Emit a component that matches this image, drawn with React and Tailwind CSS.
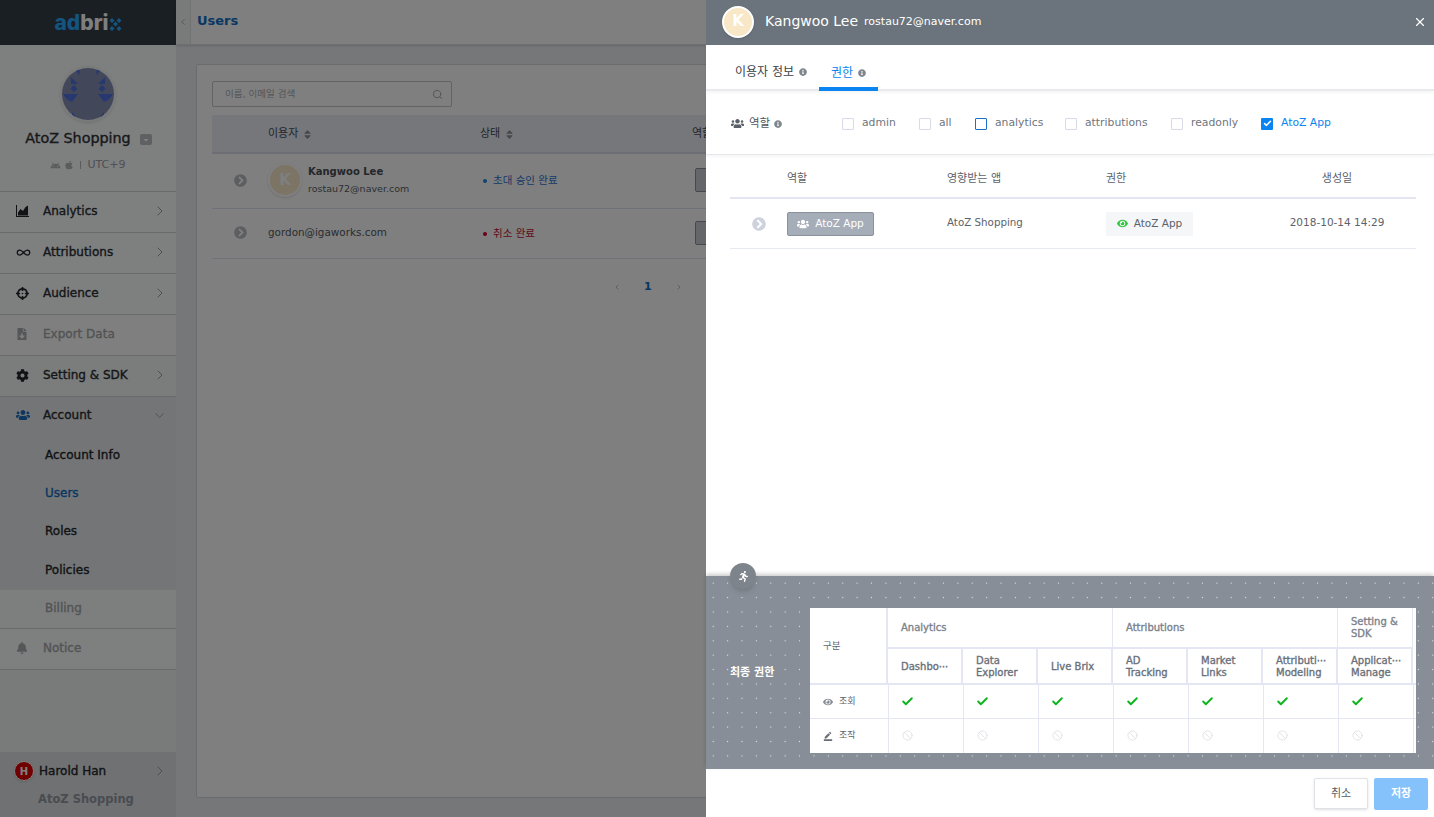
import { ChevronRight, ChevronDown, ChevronLeft, Search, X, Check, Ban, Infinity as InfinityIcon } from 'lucide-react'
import {
  FaApple, FaCrosshairs, FaFileDownload, FaCog, FaUsers, FaBell,
  FaEye, FaSort, FaRunning, FaInfoCircle, FaChevronCircleRight, FaCaretDown,
} from 'react-icons/fa'
import { MdBorderColor, MdAndroid } from 'react-icons/md'

// the reference text is a touch heavier than regular and narrower than bold
const medium = '[-webkit-text-stroke:0.35px_currentColor]'

function ChartIcon() {
  return (
    <svg width="13" height="12" viewBox="0 0 13 12" fill="currentColor">
      <path d="M0 0h1v11h12v1H0z" />
      <path d="M2 10.500V7.500l2.500-3.500L7 6l2.500-4L12 .5v10z" />
    </svg>
  )
}

function Logo() {
  return (
    <div className="flex items-center font-['Inter',sans-serif] text-[21px] font-extrabold leading-none">
      <span className="text-[#2aa8ff]">ad</span>
      <span className="text-[#ffffff]">bri</span>
      <svg width="13" height="13" viewBox="0 0 13 13" fill="#2aa8ff" className="mt-[3px]">
        <path d="M3 0l2.500 2.500L3 5 .5 2.500zM10 0l2.500 2.500L10 5 7.500 2.500zM6.500 3.500L9 6 6.500 8.500 4 6zM3 8l2.500 2.500L3 13 .5 10.500zM10 8l2.500 2.500L10 13l-2.500-2.500z" />
      </svg>
    </div>
  )
}

function AppAvatar() {
  return (
    <div className="h-[56px] w-[56px] overflow-hidden rounded-full border-2 border-[#f3f4f5] shadow">
      <svg width="52" height="52" viewBox="0 0 52 52">
        <rect width="52" height="52" fill="#868eb4" />
        <g fill="#4c70de">
          <path d="M13 2l4.500 0v5zM39 2l-4.500 0v5zM9 9l7 7H9zM43 9l-7 7h7zM12 17l3.500 3.500L12 24l-3.500-3.500zM40 17l3.500 3.500L40 24l-3.500-3.500z" />
          <path d="M1 26h15l-6 8q-6-2-9-8zM51 26H36l6 8q6-2 9-8zM10 44l6 8h-6zM42 44l-6 8h6z" />
        </g>
      </svg>
    </div>
  )
}

function MenuRow({ icon, label, muted, arrow, iconClass, bg = 'bg-[#fcfefe]' }) {
  return (
    <div className={`flex h-[41px] shrink-0 items-center border-b border-[#d2d4d6] pb-[2px] pl-[16px] pr-[8px] ${bg}`}>
      <span className={`flex w-[27px] shrink-0 ${iconClass || (muted ? 'text-[#a8acae]' : 'text-[#22262a]')}`}>{icon}</span>
      <span className={`flex-1 text-[12px] ${medium} ${muted ? 'text-[#a4a8aa]' : 'text-[#2a2e32]'}`}>{label}</span>
      {arrow && <ChevronRight size={16} strokeWidth={1.5} className="text-[#9a9ea2]" />}
    </div>
  )
}

function SubItem({ label, active, height = 'h-[38px]' }) {
  return (
    <div className={`flex shrink-0 items-center pb-[2px] pl-[45px] text-[12px] ${medium} ${height} ${active ? 'text-[#0f6fc4]' : 'text-[#22262a]'}`}>
      {label}
    </div>
  )
}

function Sidebar() {
  return (
    <aside className="flex h-full w-[176px] shrink-0 flex-col bg-[#fcfefe]">
      <div className="flex h-[45px] shrink-0 items-center justify-center bg-[#343e48]">
        <Logo />
      </div>
      <div className="flex h-[147px] shrink-0 flex-col items-center border-b border-[#d2d4d6] pt-[21px]">
        <AppAvatar />
        <div className="mt-[7px] flex items-center gap-[9px] pl-[1px]">
          <span className={`text-[14.3px] leading-[18px] text-[#2e3236] ${medium}`}>AtoZ Shopping</span>
          <span className="mt-[3px] flex h-[11px] w-[12px] items-center justify-center rounded-[2px] bg-[#bcc0c4] text-white">
            <FaCaretDown size={8} />
          </span>
        </div>
        <div className="mt-[10px] flex items-center gap-[3px] text-[11px] text-[#9ea2a6]">
          <MdAndroid size={11} className="text-[#b4b8bc]" />
          <FaApple size={10} className="text-[#b4b8bc]" />
          <span className="mx-[3px] h-[8px] border-l border-[#b4b8bc]" />
          <span>UTC+9</span>
        </div>
      </div>
      <MenuRow icon={<ChartIcon />} label="Analytics" arrow />
      <MenuRow icon={<InfinityIcon size={15} strokeWidth={2} />} label="Attributions" arrow />
      <MenuRow icon={<FaCrosshairs size={13} />} label="Audience" arrow />
      <MenuRow icon={<FaFileDownload size={12} />} label="Export Data" muted bg="bg-[#ffffff]" />
      <MenuRow icon={<FaCog size={13} />} label="Setting & SDK" arrow bg="bg-[#f6f8f9]" />
      <div className="flex shrink-0 flex-col bg-[#e9ebed]">
        <div className="flex h-[40px] items-center pb-[4px] pl-[16px] pr-[9px]">
          <span className="flex w-[27px] text-[#1c6fc0]"><FaUsers size={14} /></span>
          <span className={`flex-1 text-[12px] text-[#2a2e32] ${medium}`}>Account</span>
          <ChevronDown size={15} strokeWidth={1.5} className="text-[#9a9ea2]" />
        </div>
        <SubItem label="Account Info" />
        <SubItem label="Users" active />
        <SubItem label="Roles" />
        <SubItem label="Policies" height="h-[39px]" />
        <div className={`flex h-[39px] items-center border-b border-[#d2d4d6] bg-[#fafefc] pb-[2px] pl-[45px] text-[12px] text-[#a4a8aa] ${medium}`}>
          Billing
        </div>
      </div>
      <MenuRow icon={<FaBell size={12} />} label="Notice" muted />
      <div className="flex-1 bg-[#f2f4f5]" />
      <div className="h-[65px] shrink-0 bg-[#dfe2e5] pl-[14px] pr-[8px] pt-[9px]">
        <div className="flex items-center">
          <span className="flex h-[20px] w-[20px] items-center justify-center rounded-full border-[1.5px] border-white bg-[#e00000] text-[10px] font-bold text-white shadow">H</span>
          <span className={`ml-[5px] flex-1 text-[12px] text-[#22262a] ${medium}`}>Harold Han</span>
          <ChevronRight size={16} strokeWidth={1.5} className="text-[#9a9ea2]" />
        </div>
        <div className="mt-[10px] pl-[24px] text-[11.5px] font-bold text-[#9298a0]">AtoZ Shopping</div>
      </div>
    </aside>
  )
}

function UserRow({ children, dot, status, color, height }) {
  return (
    <div className={`grid shrink-0 grid-cols-[56px_212px_212px_1fr] items-center border-b border-[#dde3ef] pb-[2px] ${height}`}>
      <span className="flex justify-center text-[#b8bcc2]"><FaChevronCircleRight size={13} /></span>
      <div>{children}</div>
      <div className={`flex items-center gap-[6px] pl-[3px] pt-[2px] text-[10.5px] ${color}`}>
        <span className="h-[4px] w-[4px] rounded-full" style={{ background: dot }} />
        {status}
      </div>
      <div className="ml-[3px] h-[24px] w-[40px] rounded-[2px] border border-[#8a9098] bg-[#c8ccd2]" />
    </div>
  )
}

function Main() {
  return (
    <main className="flex h-full min-w-0 flex-1 flex-col bg-[#eceef0]">
      <div className="flex h-[45px] shrink-0 items-center border-b border-[#dfe1e3] bg-white shadow-sm">
        <span className="flex h-full w-[15px] items-center justify-center border-r border-[#e2e4e6] bg-[#f2f4f5] text-[#a0a4a8]">
          <ChevronLeft size={10} />
        </span>
        <span className="mb-[3px] ml-[6px] text-[13px] font-bold text-[#0f6fc4]">Users</span>
      </div>
      <div className="mx-[20px] mb-[19px] mt-[19px] flex-1 rounded-[2px] border border-[#d6d9dd] bg-white px-[15px] pt-[16px]">
        <div className="flex h-[26px] w-[240px] items-center justify-between rounded-[2px] border border-[#c2c6cb] pl-[12px] pr-[8px] text-[9.5px] text-[#a8acb2]">
          <span>이름, 이메일 검색</span>
          <Search size={11} className="text-[#a0a4aa]" />
        </div>
        <div className="mt-[8px] grid h-[39px] grid-cols-[56px_212px_212px_1fr] items-center border-b-2 border-[#d8dde9] bg-[#ebeff6] pt-[1px] text-[11px] text-[#464b54]">
          <span />
          <span className="flex items-center gap-[4px]">이용자 <FaSort size={11} className="text-[#8b9098]" /></span>
          <span className="flex items-center gap-[4px]">상태 <FaSort size={11} className="text-[#8b9098]" /></span>
          <span>역할</span>
        </div>
        <UserRow height="h-[55px]" dot="#1a8ae6" status="초대 승인 완료" color="text-[#2f6fcf]">
          <div className="flex items-center">
            <span className="flex h-[34px] w-[34px] items-center justify-center rounded-full border-2 border-white bg-[#f8e8c8] text-[15px] font-bold text-white shadow">K</span>
            <div className="ml-[6px] flex flex-col">
              <span className="text-[10px] font-bold leading-[17px] text-[#4a4e54]">Kangwoo Lee</span>
              <span className="text-[9.5px] leading-[17px] text-[#5a5f66]">rostau72@naver.com</span>
            </div>
          </div>
        </UserRow>
        <UserRow height="h-[50px]" dot="#d80032" status="취소 완료" color="text-[#c0103a]">
          <span className="block text-[10.4px] text-[#55595f]">gordon@igaworks.com</span>
        </UserRow>
        <div className="ml-[401px] mt-[20px] flex items-center text-[#9ca0a6]">
          <ChevronLeft size={8} />
          <span className="mx-[23px] text-[11px] font-bold text-[#0f6fc4]">1</span>
          <ChevronRight size={8} />
        </div>
      </div>
    </main>
  )
}

function InfoDot() {
  return <FaInfoCircle size={8} className="shrink-0 text-[#7f868e]" />
}

function Option({ label, width, checked, focus }) {
  return (
    <div className={`flex items-center gap-[8px] ${width}`}>
      {checked ? (
        <span className="flex h-[12px] w-[12px] items-center justify-center rounded-[1px] bg-[#0a84f0] text-white">
          <Check size={9} strokeWidth={4} />
        </span>
      ) : (
        <span className={`h-[12px] w-[12px] rounded-[1px] border ${focus ? 'border-[#1a72c8]' : 'border-[#d8dbe6]'}`} />
      )}
      <span className={`text-[10.8px] ${checked ? 'text-[#0a84f0]' : 'text-[#6e757e]'}`}>{label}</span>
    </div>
  )
}

const subColumns = [
  ['Dashbo⋯'],
  ['Data', 'Explorer'],
  ['Live Brix'],
  ['AD', 'Tracking'],
  ['Market', 'Links'],
  ['Attributi⋯', 'Modeling'],
  ['Applicat⋯', 'Manage'],
]

function Matrix() {
  return (
    <div className="w-[606px] bg-white text-[#7b828c]">
      <div className="grid h-[77px] grid-cols-[78px_repeat(7,75px)] grid-rows-[39px_38px] border-b-2 border-[#e4e7f3]">
        <div className="row-span-2 flex items-center border-r-2 border-[#e4e7f3] pl-[13px] text-[9.5px] text-[#5c636c]">구분</div>
        <div className={`col-span-3 flex items-center border-r border-[#e4e7f3] pl-[13px] text-[10px] ${medium}`}>Analytics</div>
        <div className={`col-span-3 flex items-center border-r border-[#e4e7f3] pl-[13px] text-[10px] ${medium}`}>Attributions</div>
        <div className={`flex items-center border-r border-[#e4e7f3] pl-[13px] text-[10px] leading-[12px] ${medium}`}>Setting &<br />SDK</div>
        {subColumns.map((lines) => (
          <div key={lines[0]} className={`flex flex-col justify-center border-r-2 border-t-2 border-[#e4e7f3] pb-[1px] pl-[13px] text-[10px] leading-[12px] text-[#69707a] ${medium}`}>
            {lines.map((line) => <span key={line} className="whitespace-nowrap">{line}</span>)}
          </div>
        ))}
      </div>
      <div className="grid h-[34px] grid-cols-[79px_repeat(7,75px)] border-b border-[#e4e7f3]">
        <div className="flex items-center gap-[6px] border-r border-[#e4e7f3] pl-[13px] text-[9px] text-[#5c636c]">
          <FaEye size={10} className="text-[#868c94]" /> 조회
        </div>
        {subColumns.map((lines) => (
          <div key={lines[0]} className="flex items-center border-r border-[#e4e7f3] pl-[12px] text-[#0bb51a]">
            <Check size={13} strokeWidth={3.5} />
          </div>
        ))}
      </div>
      <div className="grid h-[34px] grid-cols-[79px_repeat(7,75px)]">
        <div className="flex items-center gap-[6px] border-r border-[#e4e7f3] pl-[13px] text-[9px] text-[#5c636c]">
          <MdBorderColor size={10} className="text-[#686e76]" /> 조작
        </div>
        {subColumns.map((lines) => (
          <div key={lines[0]} className="flex items-center border-r border-[#e4e7f3] pb-[2px] pl-[13px] text-[#dfe1e6]">
            <Ban size={11} strokeWidth={2} />
          </div>
        ))}
      </div>
    </div>
  )
}

function Drawer() {
  return (
    <section className="absolute bottom-0 right-0 top-0 flex w-[728px] flex-col bg-white">
      <header className="flex h-[45px] shrink-0 items-center bg-[#6b747c] pb-[2px] pl-[16px] pr-[7px] text-white">
        <span className="flex h-[32px] w-[32px] items-center justify-center rounded-full border-2 border-white bg-[#f8e8c8] text-[15px] font-bold shadow">K</span>
        <span className="mb-[1px] ml-[11px] text-[14px] leading-none">Kangwoo Lee</span>
        <span className="mb-[1px] ml-[6px] text-[11px] leading-none">rostau72@naver.com</span>
        <X size={14} className="ml-auto" />
      </header>
      <nav className="flex h-[46px] shrink-0 items-end border-b-2 border-[#e8eaee] pl-[18px] shadow-[0_2px_3px_rgba(0,0,0,0.04)]">
        <div className="-mb-[2px] flex h-[46px] items-center gap-[5px] pl-[11px] pr-[12px] pt-[8px] text-[12px] text-[#3c4248]">
          이용자 정보 <InfoDot />
        </div>
        <div className="-mb-[2px] flex h-[46px] w-[59px] items-center gap-[5px] border-b-4 border-[#0a84f0] pl-[12px] pt-[14px] text-[12px] text-[#0a84f0]">
          권한 <InfoDot />
        </div>
      </nav>
      <div className="flex h-[64px] shrink-0 items-center border-b border-[#e6e8ec] pl-[25px] pt-[2px] shadow-[0_2px_3px_rgba(0,0,0,0.04)]">
        <div className="flex w-[111px] items-center gap-[4px] text-[11.5px] text-[#4f565e]">
          <FaUsers size={13} className="mr-[1px] text-[#5a6068]" />
          <span>역할</span>
          <InfoDot />
        </div>
        <div className="flex items-center">
          <Option label="admin" width="w-[77px]" />
          <Option label="all" width="w-[56px]" />
          <Option label="analytics" width="w-[90px]" focus />
          <Option label="attributions" width="w-[106px]" />
          <Option label="readonly" width="w-[90px]" />
          <Option label="AtoZ App" width="w-[80px]" checked />
        </div>
      </div>
      <div className="ml-[24px] mr-[18px] min-h-0 flex-1 text-[11px] text-[#5b626a]">
        <div className="grid h-[44px] grid-cols-[57px_160px_159px_152px_158px] items-center border-b-2 border-[#e3e6f2] pt-[6px]">
          <span />
          <span>역할</span>
          <span>영향받는 앱</span>
          <span>권한</span>
          <span className="text-center">생성일</span>
        </div>
        <div className="grid h-[50px] grid-cols-[57px_160px_159px_152px_158px] items-center border-b border-[#e6e8f2]">
          <span className="flex justify-center text-[#cdd2dc]"><FaChevronCircleRight size={14} /></span>
          <span className="flex h-[24px] w-[87px] items-center justify-center gap-[6px] rounded-[2px] border border-[#8a929c] bg-[#a5adb8] text-[10.5px] text-white">
            <FaUsers size={12} /> AtoZ App
          </span>
          <span className="pb-[2px] text-[10.3px]">AtoZ Shopping</span>
          <span className="flex h-[24px] w-[87px] items-center justify-center gap-[6px] rounded-[2px] bg-[#f4f6f8] text-[10.5px]">
            <FaEye size={11} className="text-[#2fc83c]" /> AtoZ App
          </span>
          <span className="pb-[2px] text-center text-[10.5px]">2018-10-14 14:29</span>
        </div>
      </div>
      <div className="relative flex h-[193px] shrink-0 items-start bg-[#878e97] bg-[radial-gradient(circle,#dfe2e6_0.6px,transparent_1px)] bg-[length:14.4px_14.4px] pt-[32px] shadow-[0_-2px_4px_rgba(0,0,0,0.2)]">
        <span className="absolute left-[24px] top-[-13px] flex h-[26px] w-[26px] items-center justify-center rounded-full bg-[#7d848c] text-white shadow-md">
          <FaRunning size={11} />
        </span>
        <div className="flex h-[131px] w-[104px] shrink-0 items-center pl-[24px] text-[11px] font-bold text-white">
          최종 권한
        </div>
        <Matrix />
      </div>
      <footer className="flex h-[48px] shrink-0 items-center justify-end gap-[6px] pr-[6px] pt-[1px]">
        <button className="h-[31px] w-[54px] rounded-[2px] border border-[#dfe2e6] bg-white pt-[2px] text-[11px] text-[#555b62] shadow-sm">취소</button>
        <button className="h-[32px] w-[54px] rounded-[2px] bg-[#85c1fa] pt-[2px] text-[11px] font-bold text-white">저장</button>
      </footer>
    </section>
  )
}

export default function App() {
  return (
    <div className="relative flex h-screen w-screen overflow-hidden font-['DejaVu_Sans','Noto_Sans_CJK_KR',sans-serif]">
      <Sidebar />
      <Main />
      <div className="absolute inset-0 bg-black/50" />
      <Drawer />
    </div>
  )
}
